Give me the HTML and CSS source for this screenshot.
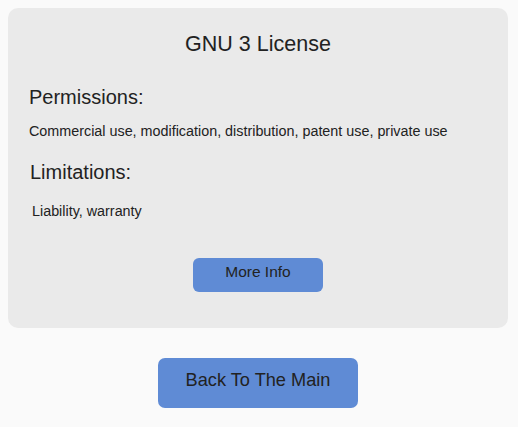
FILE: index.html
```html
<!DOCTYPE html>
<html lang="en">
<head>
<meta charset="utf-8">
<title>GNU 3 License</title>
<link rel="stylesheet" href="styles.css">
</head>
<body>
<div class="page">
  <section class="card">
    <h1 class="title">GNU 3 License</h1>
    <div class="section perms">
      <h2 class="heading">Permissions:</h2>
      <p class="text">Commercial use, modification, distribution, patent use, private use</p>
    </div>
    <div class="section limits">
      <h2 class="heading">Limitations:</h2>
      <p class="text">Liability, warranty</p>
    </div>
    <button class="btn btn-info">More Info</button>
  </section>
  <button class="btn btn-back">Back To The Main</button>
</div>
</body>
</html>
```

FILE: styles.css
```css
html, body {
  margin: 0;
  padding: 0;
  background: #fafafa;
}
body {
  padding: 8px;
  font-family: "Liberation Sans", Arial, sans-serif;
  color: #222;
}
.page {
  width: 500px;
  display: flex;
  flex-direction: column;
  align-items: center;
}
.card {
  box-sizing: border-box;
  width: 500px;
  height: 320px;
  background: #eaeaea;
  border-radius: 10px;
  padding: 24px 20px 36px;
  display: flex;
  flex-direction: column;
}
.title {
  margin: 0;
  font-size: 21.5px;
  line-height: 25px;
  font-weight: normal;
  text-align: center;
}
.heading {
  margin: 0;
  font-size: 20px;
  line-height: 24px;
  font-weight: normal;
}
.text {
  margin: 0;
  font-size: 14.35px;
  line-height: 16px;
}
.perms {
  margin-top: 28px;
  padding-left: 1px;
}
.perms .text {
  margin-top: 14px;
}
.limits {
  margin-top: 21px;
  padding-left: 2px;
}
.limits .text {
  margin-top: 19px;
  padding-left: 2px;
}
.btn {
  font-family: "Liberation Sans", Arial, sans-serif;
  color: #222;
  background: #5f8bd5;
  border: none;
  cursor: pointer;
}
.btn-info {
  align-self: center;
  margin-top: auto;
  width: 130px;
  height: 34px;
  padding: 5px 0 11px;
  font-size: 15.5px;
  line-height: 18px;
  border-radius: 6px;
}
.btn-back {
  margin-top: 30px;
  width: 200px;
  height: 50px;
  padding: 12px 0 18px;
  font-size: 18.2px;
  line-height: 20px;
  border-radius: 7px;
}
```
